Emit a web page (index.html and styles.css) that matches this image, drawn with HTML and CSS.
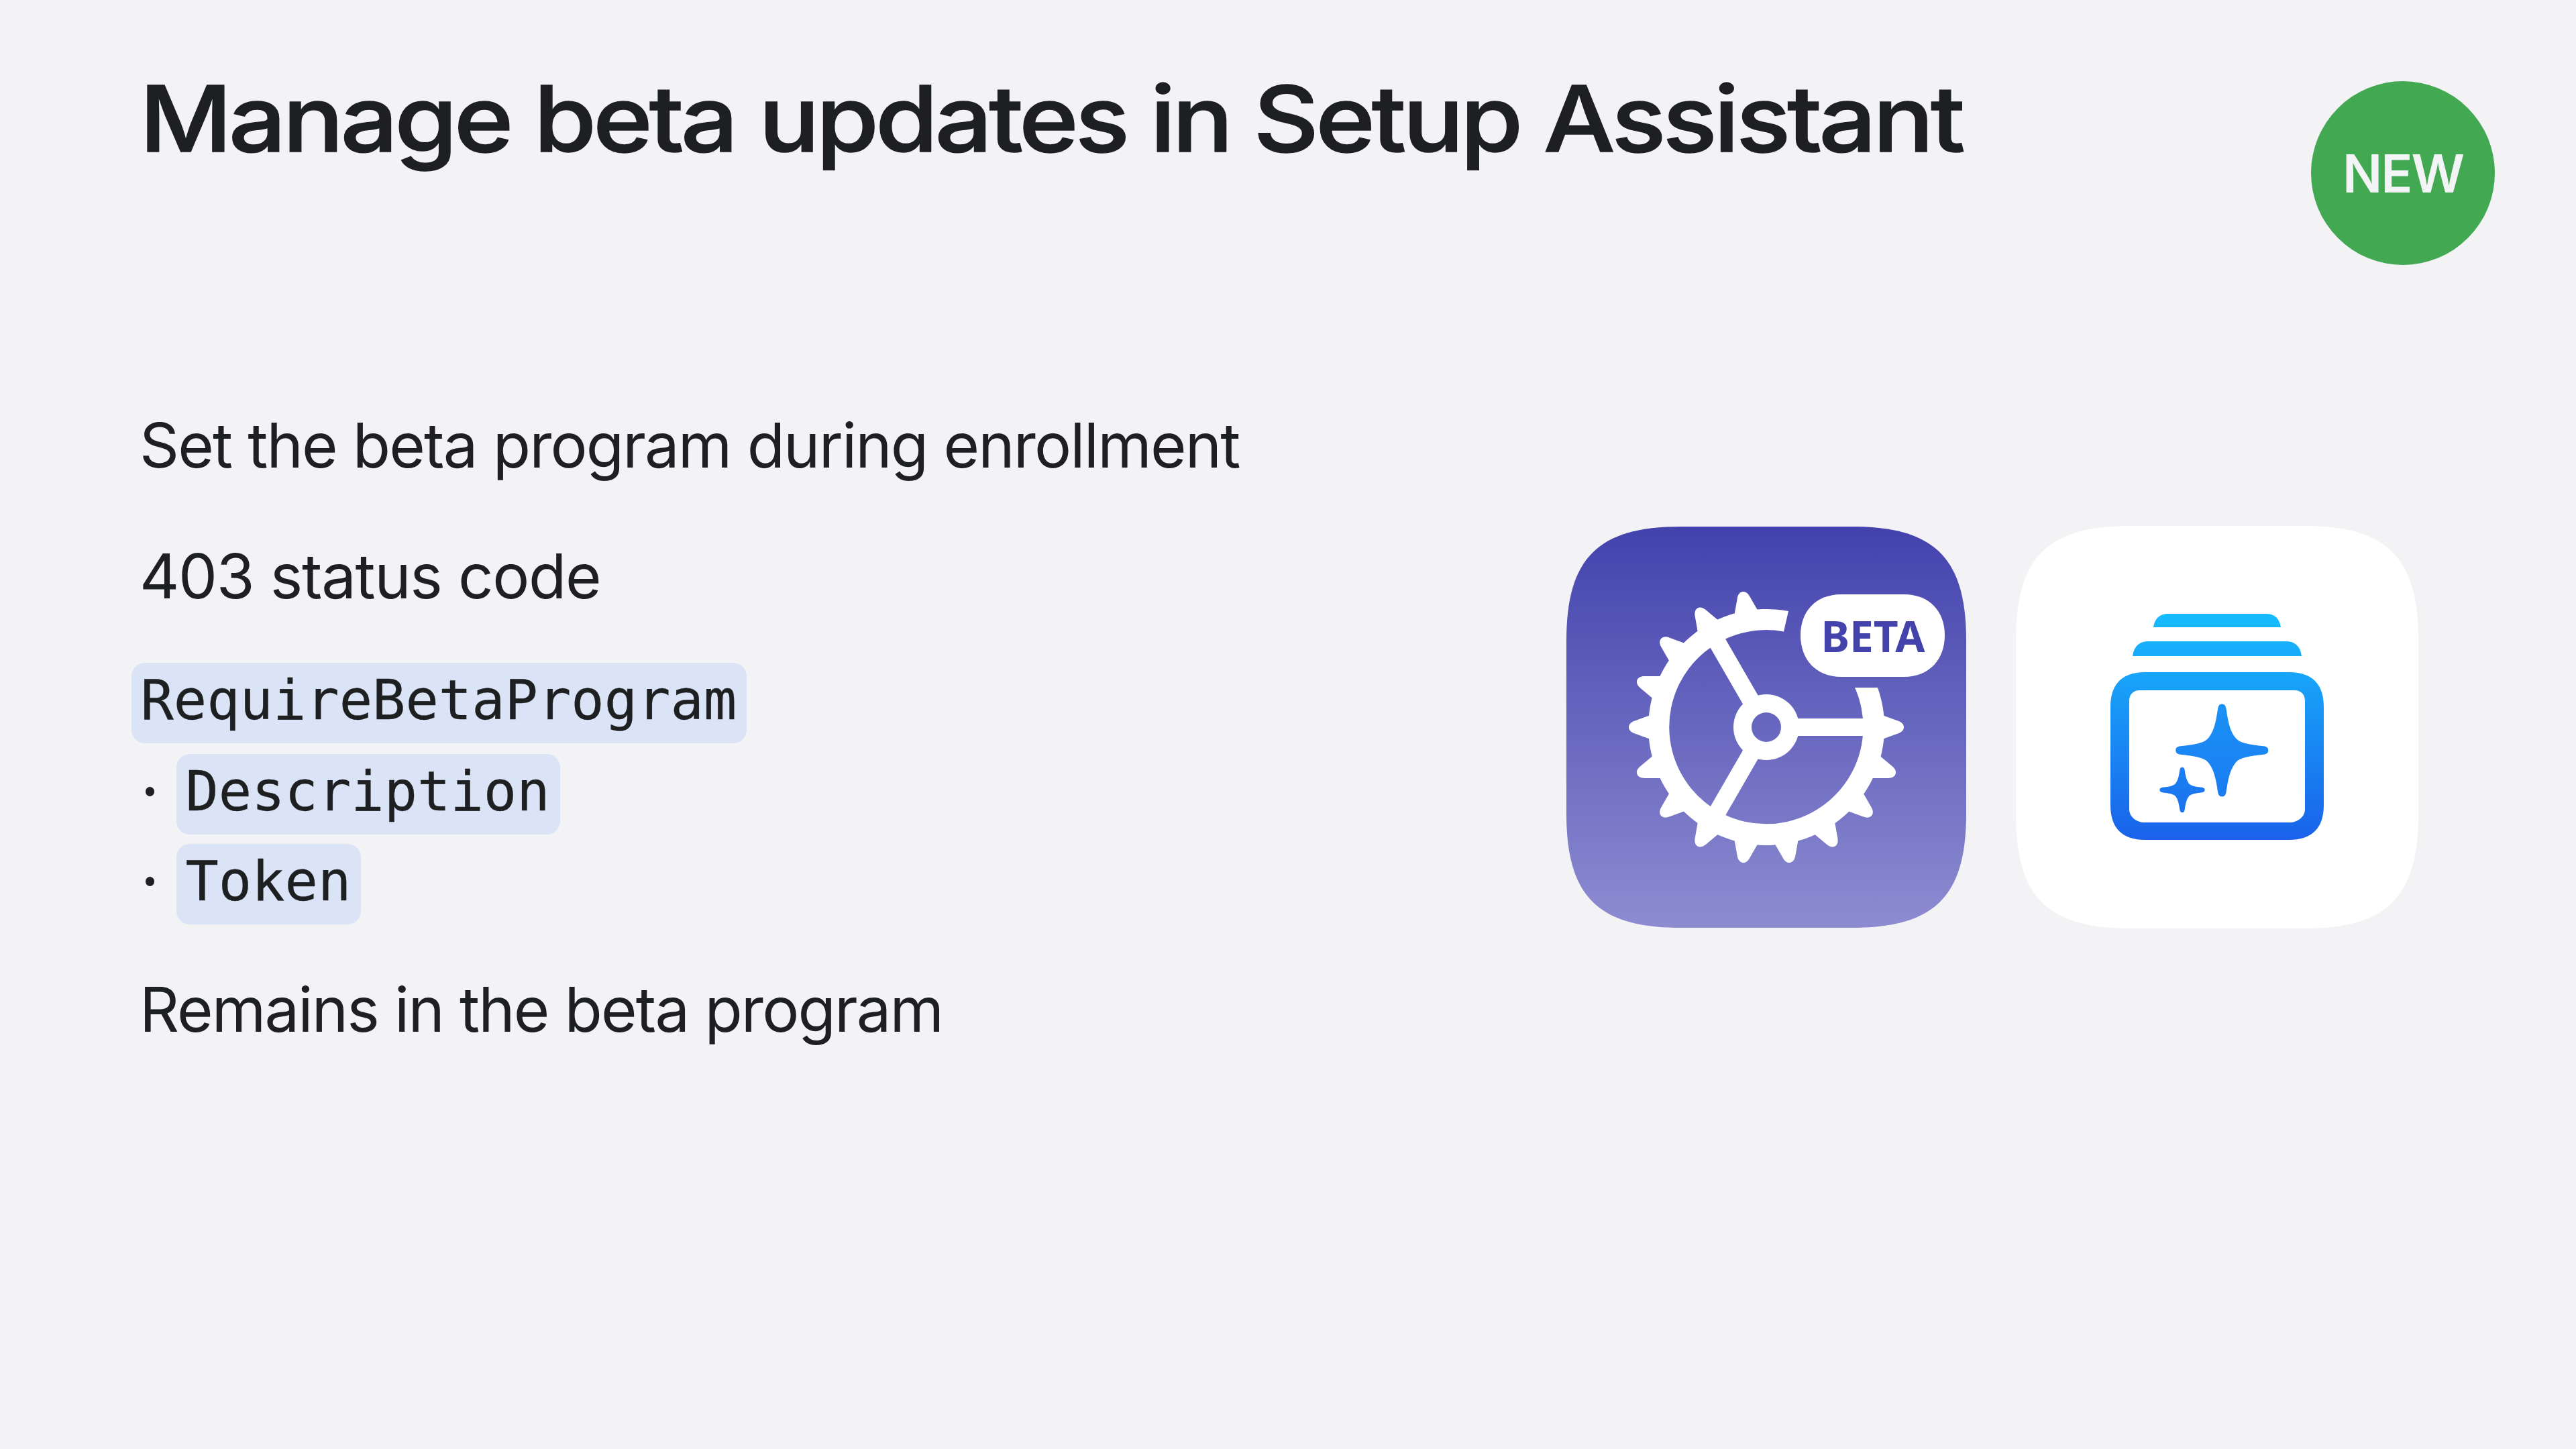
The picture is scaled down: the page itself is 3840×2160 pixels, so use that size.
FILE: index.html
```html
<!DOCTYPE html>
<html lang="en">
<head>
<meta charset="utf-8">
<title>Manage beta updates in Setup Assistant</title>
<link rel="stylesheet" href="styles.css">
</head>
<body>
<main class="slide">
  <h1 class="title">Manage beta updates in Setup Assistant</h1>
  <div class="badge">NEW</div>
  <section class="content">
    <div class="points">
      <p class="point first">Set the beta program during enrollment</p>
      <p class="point second">403 status code</p>
      <div class="code-block">
        <code class="code code-root">RequireBetaProgram</code>
        <div class="code-item"><span class="dot"></span><code class="code">Description</code></div>
        <div class="code-item"><span class="dot"></span><code class="code">Token</code></div>
      </div>
      <p class="point last">Remains in the beta program</p>
    </div>
    <div class="icons">
      <svg class="icon icon-settings" viewBox="0 0 596 598" aria-label="Beta settings icon">
        <defs>
          <linearGradient id="purple" x1="0" y1="0" x2="0" y2="1">
            <stop offset="0" stop-color="#4342ad"/>
            <stop offset="1" stop-color="#8d8cd1"/>
          </linearGradient>
          <path id="tooth" d="M170 -19L196 -9.500C202 -7.500 205 -4 205 0C205 4 202 7.500 196 9.500L170 19Z"/>
        </defs>
        <path fill="url(#purple)" d="M170 0H426C549 0 596 47 596 170V428C596 551 549 598 426 598H170C47 598 0 551 0 428V170C0 47 47 0 170 0Z"/>
        <g transform="translate(298 299)" fill="#fff">
          <path d="M33 -173A176 176 0 1 0 166 -59L132 -59A144.6 144.6 0 1 1 26 -142.5Z"/>
          <use href="#tooth"/>
          <use href="#tooth" transform="rotate(100)"/>
          <use href="#tooth" transform="rotate(80)"/>
          <use href="#tooth" transform="rotate(20)"/>
          <use href="#tooth" transform="rotate(40)"/>
          <use href="#tooth" transform="rotate(60)"/>
          <use href="#tooth" transform="rotate(120)"/>
          <use href="#tooth" transform="rotate(140)"/>
          <use href="#tooth" transform="rotate(160)"/>
          <use href="#tooth" transform="rotate(180)"/>
          <use href="#tooth" transform="rotate(200)"/>
          <use href="#tooth" transform="rotate(220)"/>
          <use href="#tooth" transform="rotate(240)"/>
          <use href="#tooth" transform="rotate(260)"/>
          <path d="M0 -49A49 49 0 1 1 0 49A49 49 0 1 1 0 -49ZM0 -22A22 22 0 1 0 0 22A22 22 0 1 0 0 -22Z" fill-rule="evenodd"/>
          <path d="M45 -13H160V13H45Z"/>
          <path d="M45 -13H160V13H45Z" transform="rotate(120)"/>
          <path d="M45 -13H160V13H45Z" transform="rotate(240)"/>
          <path d="M112 -198H205C244 -198 266 -172 266 -137C266 -102 244 -75 205 -75H112C73 -75 51 -102 51 -137C51 -172 73 -198 112 -198Z"/>
          <text class="beta-text" x="159" y="-112" text-anchor="middle">BETA</text>
        </g>
      </svg>
      <svg class="icon icon-stack" viewBox="0 0 600 600" aria-label="App updates icon">
        <defs>
          <linearGradient id="blue" gradientUnits="userSpaceOnUse" x1="0" y1="131" x2="0" y2="468">
            <stop offset="0" stop-color="#17bcff"/>
            <stop offset="1" stop-color="#1a62ea"/>
          </linearGradient>
          <linearGradient id="blue-big" x1="0" y1="0" x2="0" y2="1">
            <stop offset="0" stop-color="#1b92f6"/>
            <stop offset="1" stop-color="#1a7cf1"/>
          </linearGradient>
          <linearGradient id="blue-small" x1="0" y1="0" x2="0" y2="1">
            <stop offset="0" stop-color="#1a80f2"/>
            <stop offset="1" stop-color="#1b70ee"/>
          </linearGradient>
          <path id="star" d="M0 -100C6 -100 8 -96 9 -90C13 -64 16 -44 29 -27C38 -15 60 -12 90 -9C96 -8 100 -6 100 0C100 6 96 8 90 9C60 12 38 15 29 27C16 44 13 64 9 90C8 96 6 100 0 100C-6 100 -8 96 -9 90C-13 64 -16 44 -29 27C-38 15 -60 12 -90 9C-96 8 -100 6 -100 0C-100 -6 -96 -8 -90 -9C-60 -12 -38 -15 -29 -27C-16 -44 -13 -64 -9 -90C-8 -96 -6 -100 0 -100Z"/>
        </defs>
        <path fill="#fff" d="M170 0H430C553 0 600 47 600 170V430C600 553 553 600 430 600H170C47 600 0 553 0 430V170C0 47 47 0 170 0Z"/>
        <path fill="url(#blue)" d="M205 151C207 138 214 131 227 131H373C386 131 393 138 395 151Z"/>
        <path fill="url(#blue)" d="M174 194C176 179 184 172 198 172H402C416 172 424 179 426 194Z"/>
        <path fill="url(#blue)" fill-rule="evenodd" d="M193 218H407C442 218 459 236 459 270V416C459 450 442 468 407 468H193C158 468 141 450 141 416V270C141 236 158 218 193 218ZM185 245C175 245 169 251 169 261V422C169 434 180 442 192 442H408C420 442 431 434 431 422V261C431 251 425 245 415 245Z"/>
        <use href="#star" fill="url(#blue-big)" transform="translate(307.300 334.500) scale(.69)"/>
        <use href="#star" class="star-small" fill="url(#blue-small)" transform="translate(248 393.500) scale(.33)"/>
      </svg>
    </div>
  </section>
</main>
</body>
</html>
```
FILE: styles.css
```css
html, body {
  margin: 0;
  padding: 0;
}

body {
  width: 3840px;
  height: 2160px;
  overflow: hidden;
  background: #f3f3f6;
}

.slide {
  position: relative;
  box-sizing: border-box;
  width: 3840px;
  height: 2160px;
  padding: 97px 0 0 208px;
  background: #f3f3f6;
  color: #1d1f21;
  font-family: "Inter", "Liberation Sans", sans-serif;
}

.title {
  margin: 0;
  width: max-content;
  font-size: 136px;
  line-height: 160px;
  font-weight: 520;
  letter-spacing: -4.480px;
  -webkit-text-stroke: 1.500px #1d1f21;
  white-space: nowrap;
  transform: scaleX(1.11);
  transform-origin: 0 50%;
}

.badge {
  position: absolute;
  left: 3445px;
  top: 121px;
  width: 274px;
  height: 274px;
  border-radius: 50%;
  background: #43a852;
  color: #f3f4f6;
  font-size: 78px;
  font-weight: 600;
  letter-spacing: -2px;
  display: flex;
  align-items: center;
  justify-content: center;
}

.content {
  display: flex;
  align-items: flex-start;
  justify-content: space-between;
  margin-top: 348.500px;
  padding-right: 235px;
}

.points {
  display: flex;
  flex-direction: column;
}

.point {
  margin: 0;
  font-size: 92px;
  line-height: 116px;
  letter-spacing: -1.850px;
  white-space: nowrap;
}

.second {
  margin-top: 79px;
  letter-spacing: -1.350px;
}

.last {
  margin-top: 69px;
}

.code-block {
  display: flex;
  flex-direction: column;
  align-items: flex-start;
  margin-top: 71.500px;
}

.code {
  display: inline-block;
  height: 120px;
  line-height: 112px;
  padding: 0 15px 0 14px;
  border-radius: 20px;
  background: #dbe4f6;
  font-family: "DejaVu Sans Mono", monospace;
  font-size: 82px;
  -webkit-text-stroke: 0.300px #1d1f21;
}

.code-root {
  margin-left: -12.500px;
}

.code-item {
  display: flex;
  align-items: center;
  margin-top: 16px;
}

.code-item + .code-item {
  margin-top: 14px;
}

.dot {
  width: 13.500px;
  height: 13.500px;
  margin: 0 32.500px 8px 8.500px;
  border-radius: 50%;
  background: #1d1f21;
}

.icons {
  display: flex;
  align-items: center;
  gap: 74px;
  margin-top: 178.500px;
}

.icon {
  display: block;
  flex: none;
}

.icon-settings {
  width: 596px;
  height: 598px;
}

.icon-stack {
  width: 600px;
  height: 600px;
}

.star-small {
  stroke: #1a78f0;
  stroke-width: 4px;
  stroke-linejoin: round;
}

.beta-text {
  font-family: "Noto Sans", sans-serif;
  font-size: 64px;
  font-weight: 700;
  fill: #4343ab;
}
```
